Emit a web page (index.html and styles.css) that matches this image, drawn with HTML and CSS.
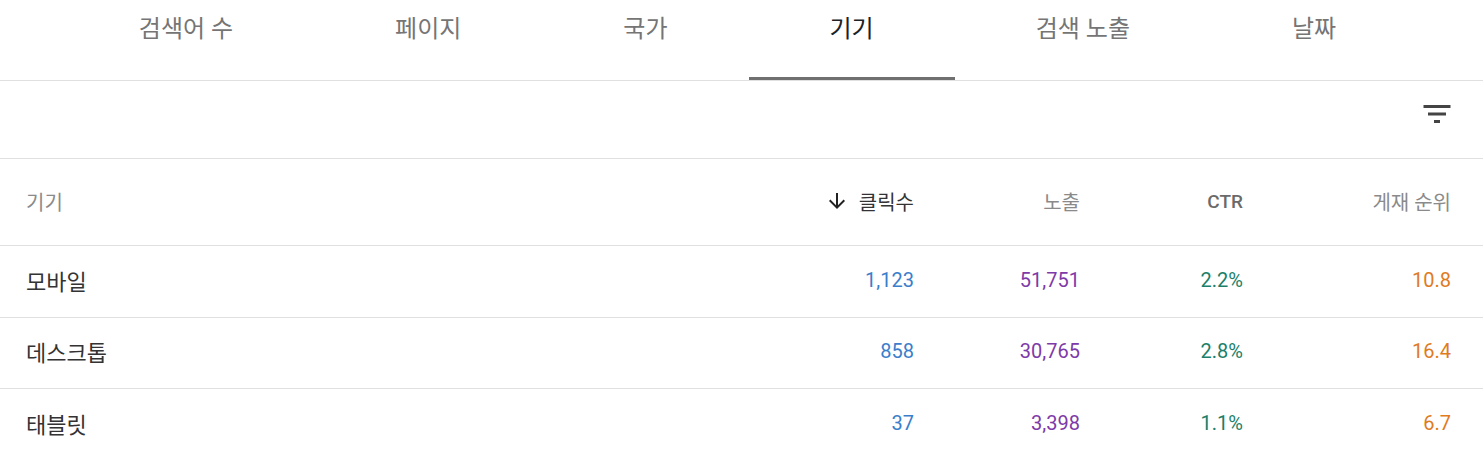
FILE: index.html
```html
<!DOCTYPE html>
<html lang="ko">
<head>
    <meta charset="UTF-8">
    <title>기기</title>
    <link rel="stylesheet" href="styles.css">
</head>
<body>
<div class="report">
    <div class="tabs">
        <div class="tab">검색어 수</div>
        <div class="tab">페이지</div>
        <div class="tab">국가</div>
        <div class="tab active">기기</div>
        <div class="tab">검색 노출</div>
        <div class="tab">날짜</div>
    </div>

    <div class="toolbar">
        <svg class="filter-icon" viewBox="0 0 24 24" width="36" height="36">
            <path d="M10 18h4v-2h-4v2zM3 6v2h18V6H3zm3 7h12v-2H6v2z"/>
        </svg>
    </div>

    <div class="table">
        <div class="row head">
            <div class="cell name">기기</div>
            <div class="cell num sorted">
                <svg class="sort-icon" viewBox="0 0 24 24" width="24" height="24">
                    <path d="M20 12l-1.41-1.41L13 16.17V4h-2v12.17l-5.58-5.59L4 12l8 8 8-8z"/>
                </svg>
                클릭수
            </div>
            <div class="cell num">노출</div>
            <div class="cell num latin">CTR</div>
            <div class="cell num">게재 순위</div>
        </div>
        <div class="row">
            <div class="cell name">모바일</div>
            <div class="cell num clicks">1,123</div>
            <div class="cell num impressions">51,751</div>
            <div class="cell num ctr">2.2%</div>
            <div class="cell num position">10.8</div>
        </div>
        <div class="row">
            <div class="cell name">데스크톱</div>
            <div class="cell num clicks">858</div>
            <div class="cell num impressions">30,765</div>
            <div class="cell num ctr">2.8%</div>
            <div class="cell num position">16.4</div>
        </div>
        <div class="row">
            <div class="cell name">태블릿</div>
            <div class="cell num clicks">37</div>
            <div class="cell num impressions">3,398</div>
            <div class="cell num ctr">1.1%</div>
            <div class="cell num position">6.7</div>
        </div>
    </div>
</div>
</body>
</html>
```

FILE: styles.css
```css
* {
    box-sizing: border-box;
}

body {
    margin: 0;
    background: #fff;
    font-family: Roboto, "Noto Sans CJK KR", sans-serif;
    color: #333;
}

.tabs {
    display: flex;
    justify-content: center;
    height: 81px;
    padding-right: 8px;
    border-bottom: 1px solid #e0e0e0;
}
.tabs .tab {
    height: 80px;
    padding: 12px 81px 0 81px;
    font-size: 24px;
    line-height: 34px;
    color: #757575;
    border-bottom: 3px solid transparent;
    white-space: nowrap;
}
.tabs .tab.active {
    color: #202124;
    border-bottom-color: #707070;
}

.toolbar {
    display: flex;
    justify-content: flex-end;
    height: 78px;
    padding: 15px 28px 0 0;
    border-bottom: 1px solid #e0e0e0;
}
.toolbar .filter-icon {
    fill: #444;
}

.table .row {
    display: grid;
    grid-template-columns: 1fr 200px 166px 163px 208px;
    align-items: center;
    height: 71.5px;
    padding: 0 32px 3px 26px;
    border-bottom: 1px solid #e0e0e0;
    font-size: 20px;
}
.table .row .cell.name {
    font-size: 22px;
    color: #333;
}
.table .row.head {
    height: 87px;
    font-size: 20px;
    color: #8a8a8a;
    padding-bottom: 2px;
}
.table .row.head .cell.name {
    font-size: 20px;
    color: #8a8a8a;
}
.table .cell.num {
    text-align: right;
}
.table .row.head .cell.sorted {
    display: flex;
    justify-content: flex-end;
    align-items: center;
    gap: 10px;
    color: #333;
}
.table .sort-icon {
    fill: #222;
}
.table .row.head .cell.latin {
    font-size: 19px;
    font-weight: 500;
    color: #6a6a6a;
}

.clicks {
    color: #3b7ecb;
}
.impressions {
    color: #7e3aa8;
}
.ctr {
    color: #1b7f6a;
}
.position {
    color: #e07b1e;
}
```
